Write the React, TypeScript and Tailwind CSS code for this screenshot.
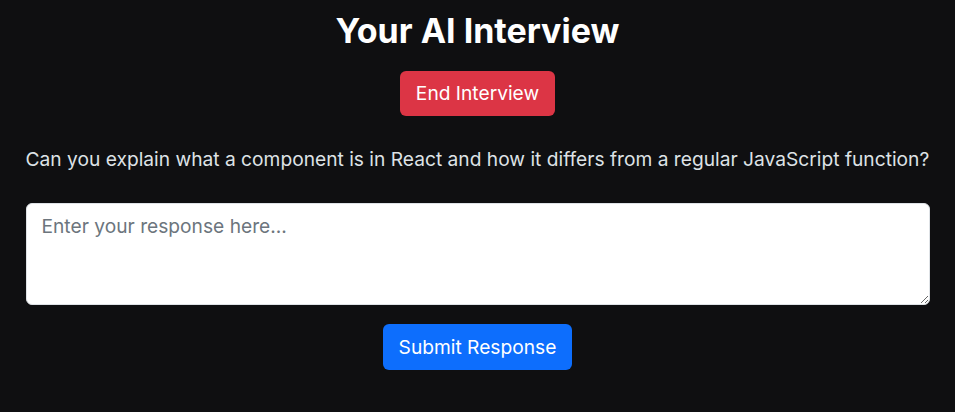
import React from "react";

export default function App() {
  return (
    <div className="min-h-[412px] w-full bg-[#0f0f11] text-white" style={{ fontFamily: "Inter, 'Noto Sans', sans-serif" }}>
      <div className="mx-auto flex w-[904px] flex-col items-center pt-[12px]">
        <h1 className="text-[34px] font-bold leading-[38px] text-white">Your AI Interview</h1>
        <button className="mt-[21px] rounded-[6px] bg-[#dc3545] px-4 py-[8px] text-[19.2px] leading-[29px] text-white">
          End Interview
        </button>
        <p className="mt-[29px] w-full text-[19.2px] leading-[29px] text-[#dee2e6]">
          Can you explain what a component is in React and how it differs from a regular JavaScript function?
        </p>
        <textarea
          className="mt-[29px] h-[102px] w-full rounded-[6px] border border-[#dee2e6] bg-white px-[15px] py-[8px] text-[19.2px] leading-[29px] text-[#212529] placeholder:text-[#6c757d] outline-none"
          placeholder="Enter your response here..."
        />
        <button className="mt-[19px] rounded-[6px] bg-[#0d6efd] px-4 py-[8px] text-[19.2px] leading-[30px] text-white">
          Submit Response
        </button>
      </div>
    </div>
  );
}
